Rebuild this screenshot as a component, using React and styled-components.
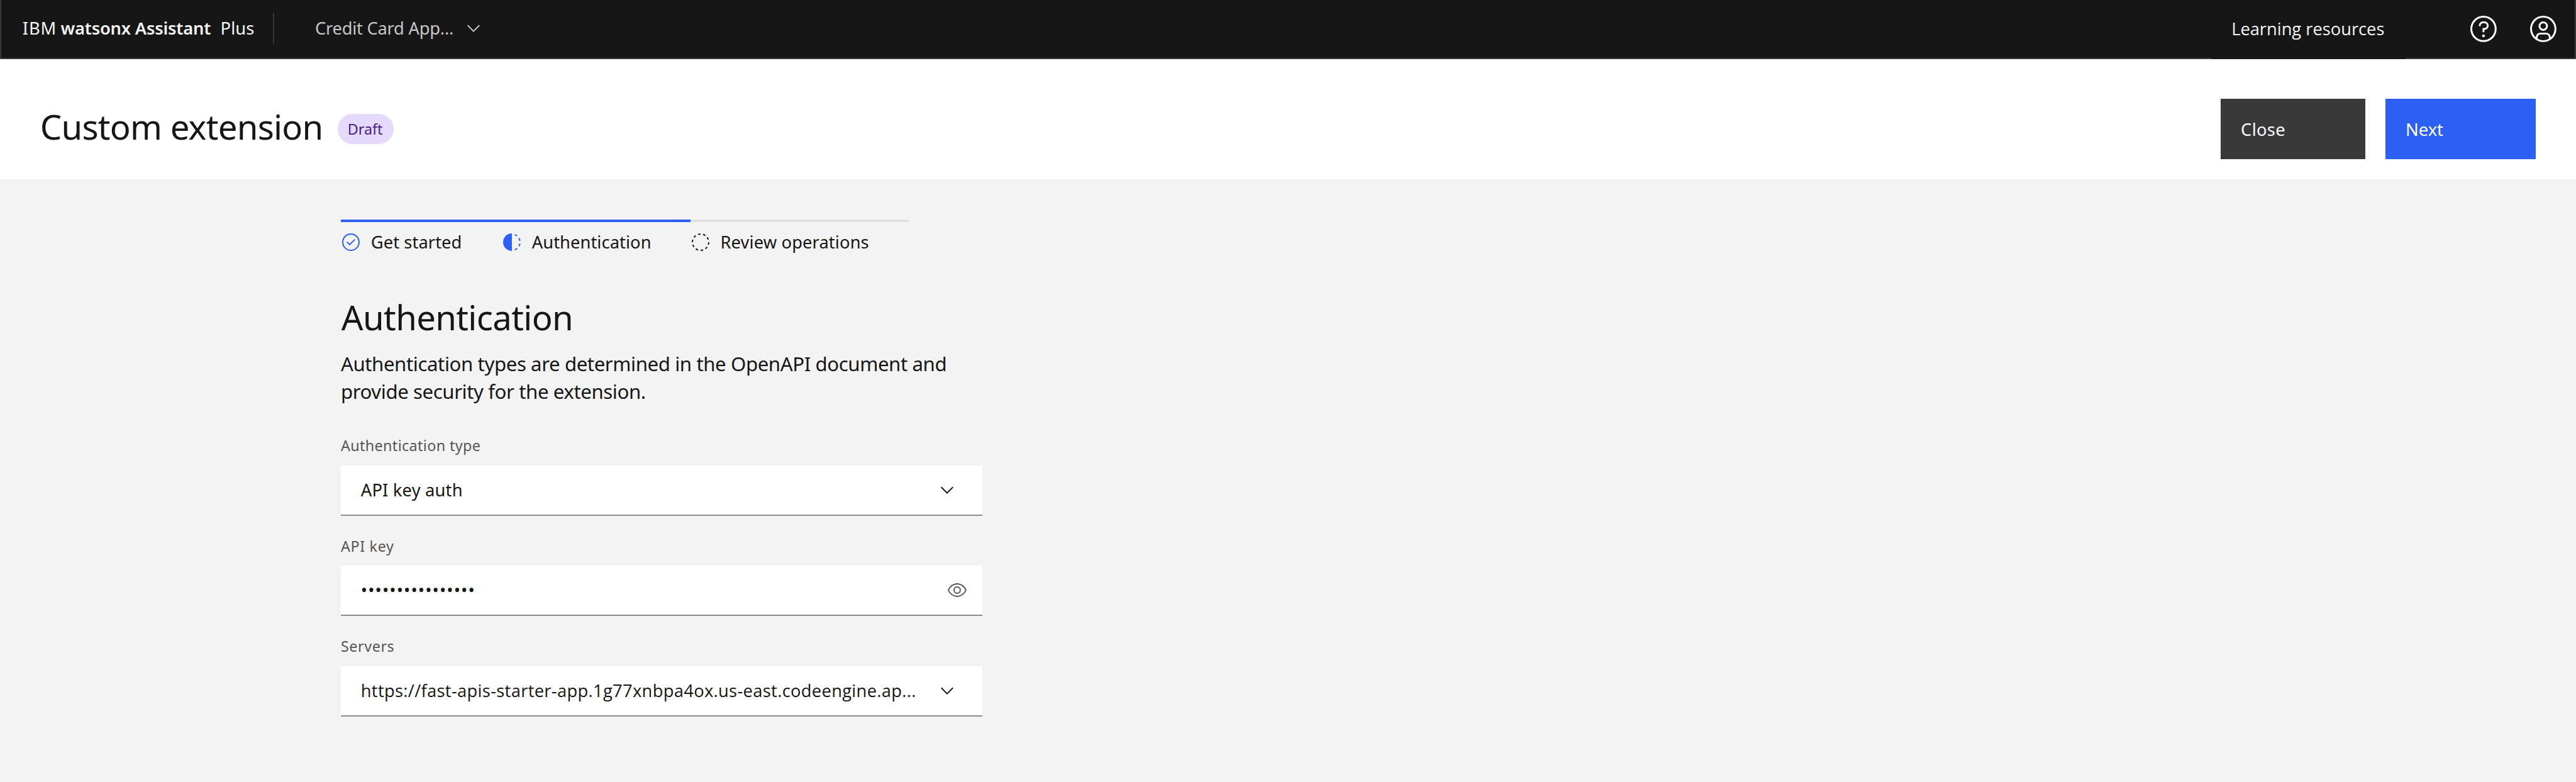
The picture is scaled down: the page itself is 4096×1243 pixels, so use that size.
import React from "react";
import styled, { createGlobalStyle, css } from "styled-components";

/* Sizes are authored on a 4112-unit wide canvas; 32 units make one rem. */
const u = (n) => `${n / 32}rem`;

const sans = `"Noto Sans", "Open Sans", sans-serif`;
const sansAlt = `"Open Sans", "Noto Sans", sans-serif`;

const color = {
  ink: "#161616",
  muted: "#565656",
  line: "#393939",
  blue: "#2c60f5",
  layer: "#f3f3f3",
  track: "#e0e0e0",
  rule: "#8d8d8d",
};

const GlobalStyle = createGlobalStyle`
  *, *::before, *::after { box-sizing: border-box; }
  html { font-size: calc(100vw / 128.5); }
  body { margin: 0; background: ${color.layer}; color: ${color.ink}; font-family: ${sans}; }
  h1, h2, p { margin: 0; font-weight: 400; }
  button { border: 0; font-family: inherit; text-align: left; }
`;

const type = css`
  font-size: ${(p) => u(p.$size || 27.4)};
  letter-spacing: ${(p) => u(p.$track || 0)};
  font-family: ${(p) => (p.$alt ? sansAlt : sans)};
  font-variant-ligatures: none;
  white-space: nowrap;
`;

const Text = styled.span`
  ${type}
  font-weight: ${(p) => p.$weight || 400};
`;

const Page = styled.div`
  display: flex;
  flex-direction: column;
  min-height: 100vh;
`;

const Header = styled.header`
  display: flex;
  align-items: center;
  height: ${u(94)};
  padding: 0 ${u(26)} ${u(1)} ${u(34)};
  border: solid ${color.line};
  border-width: 0 2px 2px;
  background: ${color.ink};
  color: #f4f4f4;
  line-height: ${u(40)};
`;

const Brand = styled.div`
  display: grid;
  grid-template-columns: ${u(61)} ${u(255)} ${u(84)};
  align-items: center;
`;

const Divider = styled.div`
  width: 2px;
  height: ${u(48)};
  background: ${color.line};
`;

const Switcher = styled.div`
  display: grid;
  grid-template-columns: ${u(237)} ${u(32)};
  align-items: center;
  margin-left: ${u(65)};
  color: #c6c6c6;
`;

const Learning = styled.div`
  display: flex;
  align-items: center;
  align-self: stretch;
  width: ${u(310)};
  margin: 0 ${u(100)} ${u(-3)} auto;
  padding: 0 0 ${u(2)} ${u(32)};
  background: ${color.ink};
  color: #f4f4f4;
`;

const HeaderIcons = styled.div`
  display: flex;
  gap: ${u(48)};
  padding-top: ${u(1)};
  color: #fff;
`;

const Svg = styled.svg`
  display: block;
  flex: none;
  width: ${(p) => u(p.$size || 32)};
  height: ${(p) => u(p.$size || 32)};
  fill: ${(p) => p.$fill || "currentColor"};
`;

const TitleBar = styled.section`
  display: flex;
  align-items: center;
  height: ${u(192)};
  padding: ${u(64)} ${u(64)} ${u(32)};
  background: #fff;
`;

const Title = styled.h1`
  ${type}
  width: ${u(475)};
  padding-bottom: ${u(6)};
  line-height: ${u(72)};
`;

const Tag = styled.span`
  ${type}
  width: ${u(89)};
  height: ${u(48)};
  padding-left: ${u(16)};
  border-radius: ${u(24)};
  background: #e6dafc;
  color: #4b2286;
  line-height: ${u(50)};
`;

const Actions = styled.div`
  display: flex;
  gap: ${u(32)};
  margin-left: auto;
`;

const Button = styled.button`
  ${type}
  width: ${(p) => u(p.$width)};
  height: ${u(96)};
  padding: 0 0 0 ${u(32)};
  background: ${(p) => (p.$primary ? color.blue : color.line)};
  color: #fff;
`;

const Main = styled.main`
  flex: 1;
  padding: ${u(64)} 0 0 ${u(544)};
`;

const Steps = styled.div`
  display: grid;
  grid-template-columns: ${u(257)} ${u(301)} ${u(349)};
`;

const Step = styled.div`
  display: flex;
  align-items: center;
  gap: ${u(16)};
  height: ${u(52)};
  padding-top: ${u(16)};
  border-top: 4px solid ${(p) => (p.$reached ? color.blue : color.track)};
  line-height: ${u(32)};
`;

const Heading = styled.h2`
  ${type}
  margin: ${u(69)} 0 0 ${u(1)};
  line-height: ${u(72)};
`;

const Intro = styled.p`
  ${type}
  margin: ${u(16)} 0 ${u(48)};
  line-height: ${u(44)};
`;

const Form = styled.div`
  display: flex;
  flex-direction: column;
  gap: ${u(32)};
  width: ${u(1024)};
`;

const Field = styled.div`
  display: flex;
  flex-direction: column;
  gap: ${u(16)};
`;

const Label = styled.div`
  ${type}
  height: ${u(32)};
  color: ${color.muted};
  line-height: ${u(34)};
`;

const Control = styled.div`
  display: flex;
  align-items: center;
  justify-content: space-between;
  height: ${u(80)};
  padding: 0 ${(p) => u(p.$end)} 0 ${u(32)};
  border-bottom: 2px solid ${color.rule};
  background: #fff;
  line-height: ${u(40)};
`;

const ChevronDown = () => (
  <Svg viewBox="0 0 16 16">
    <polygon points="8,11 3,6 3.7,5.3 8,9.6 12.3,5.3 13,6" />
  </Svg>
);

const Help = () => (
  <Svg $size={48} viewBox="0 0 32 32">
    <path d="M16,2A14,14,0,1,0,30,16,14,14,0,0,0,16,2Zm0,26A12,12,0,1,1,28,16,12,12,0,0,1,16,28Z" />
    <circle cx="16" cy="23.5" r="1.5" />
    <path d="M17,8H15.5A4.49,4.49,0,0,0,11,12.5V13h2v-.5A2.5,2.5,0,0,1,15.5,10H17a2.5,2.5,0,0,1,0,5H15v4.5h2V17a4.5,4.5,0,0,0,0-9Z" />
  </Svg>
);

const UserAvatar = () => (
  <Svg $size={48} viewBox="0 0 32 32">
    <path d="M16,8a5,5,0,1,0,5,5A5,5,0,0,0,16,8Zm0,8a3,3,0,1,1,3-3A3.0034,3.0034,0,0,1,16,16Z" />
    <path d="M16,2A14,14,0,1,0,30,16,14.0158,14.0158,0,0,0,16,2ZM10,26.3765V25a3.0033,3.0033,0,0,1,3-3h6a3.0033,3.0033,0,0,1,3,3v1.3765a11.8989,11.8989,0,0,1-12,0Zm13.9925-1.4507A5.0016,5.0016,0,0,0,19,20H13a5.0016,5.0016,0,0,0-4.9925,4.9258,12,12,0,1,1,15.985,0Z" />
  </Svg>
);

const CheckmarkOutline = () => (
  <Svg viewBox="0 0 32 32" $fill={color.blue}>
    <path d="M14 21.414 9 16.413 10.413 15 14 18.586 21.585 11 23 12.415 14 21.414z" />
    <path d="M16,2A14,14,0,1,0,30,16,14,14,0,0,0,16,2Zm0,26A12,12,0,1,1,28,16,12,12,0,0,1,16,28Z" />
  </Svg>
);

const Incomplete = () => (
  <Svg viewBox="0 0 32 32" $fill={color.blue}>
    <path d="M23.7642 6.8593l1.2851-1.5315A13.976 13.976 0 0020.8672 2.887l-.6836 1.8776A11.9729 11.9729 0 0123.7642 6.8593zM27.8079 14l1.9677-.4128A13.8888 13.8888 0 0028.14 9.0457L26.4087 10A12.52 12.52 0 0127.8079 14zM20.1836 27.2354l.6836 1.8776a13.976 13.976 0 004.1821-2.4408l-1.2851-1.5315A11.9729 11.9729 0 0120.1836 27.2354zM26.4087 22L28.14 23a14.14 14.14 0 001.6382-4.5872L27.8079 18.0659A12.1519 12.1519 0 0126.4087 22zM16 30V2a14 14 0 000 28z" />
  </Svg>
);

const CircleDash = () => (
  <Svg viewBox="0 0 32 32">
    <path d="M7.7 4.7a14.7 14.7 0 00-3 3.1L6.3 9A13.26 13.26 0 018.9 6.3zM4.6 12.3l-1.9-.6A12.51 12.51 0 002 16H4A11.48 11.48 0 014.6 12.3zM2.7 20.4a14.4 14.4 0 002 3.9l1.6-1.2a12.89 12.89 0 01-1.7-3.3zM7.8 27.3a14.4 14.4 0 003.9 2l.6-1.9A12.89 12.89 0 019 25.7zM11.7 2.7l.6 1.9A11.48 11.48 0 0116 4V2A12.51 12.51 0 0011.7 2.7zM24.2 27.3a15.18 15.18 0 003.1-3.1L25.7 23A11.53 11.53 0 0123 25.7zM27.4 19.7l1.9.6A15.47 15.47 0 0030 16H28A11.48 11.48 0 0127.4 19.7zM29.2 11.6a14.4 14.4 0 00-2-3.9L25.6 8.9a12.89 12.89 0 011.7 3.3zM24.1 4.6a14.4 14.4 0 00-3.9-2l-.6 1.9a12.89 12.89 0 013.3 1.7zM20.3 29.3l-.6-1.9A11.48 11.48 0 0116 28v2A21.42 21.42 0 0020.3 29.3z" />
  </Svg>
);

const View = () => (
  <Svg viewBox="0 0 32 32" $fill={color.muted}>
    <path d="M30.94,15.66A16.69,16.69,0,0,0,16,5,16.69,16.69,0,0,0,1.06,15.66a1,1,0,0,0,0,.68A16.69,16.69,0,0,0,16,27,16.69,16.69,0,0,0,30.94,16.34,1,1,0,0,0,30.94,15.66ZM16,25c-5.3,0-10.9-3.93-12.93-9C5.1,10.93,10.7,7,16,7s10.9,3.93,12.93,9C26.9,21.07,21.3,25,16,25Z" />
    <path d="M16,10a6,6,0,1,0,6,6A6,6,0,0,0,16,10Zm0,10a4,4,0,1,1,4-4A4,4,0,0,1,16,20Z" />
  </Svg>
);

export default function App() {
  return (
    <Page>
      <GlobalStyle />
      <Header>
        <Brand>
          <Text $track={0.8}>IBM</Text>
          <Text $weight={600} $track={-0.19}>watsonx Assistant</Text>
          <Text $track={0.1}>Plus</Text>
        </Brand>
        <Divider />
        <Switcher>
          <Text $track={-0.23}>Credit Card App...</Text>
          <ChevronDown />
        </Switcher>
        <Learning>
          <Text $alt>Learning resources</Text>
        </Learning>
        <HeaderIcons>
          <Help />
          <UserAvatar />
        </HeaderIcons>
      </Header>

      <TitleBar>
        <Title $size={54.7} $track={-0.71}>Custom extension</Title>
        <Tag $size={23.4}>Draft</Tag>
        <Actions>
          <Button $width={231} $track={0.3}>Close</Button>
          <Button $width={240} $primary>Next</Button>
        </Actions>
      </TitleBar>

      <Main>
        <Steps>
          <Step $reached>
            <CheckmarkOutline />
            <Text $track={0.1}>Get started</Text>
          </Step>
          <Step $reached>
            <Incomplete />
            <Text $track={0.08}>Authentication</Text>
          </Step>
          <Step>
            <CircleDash />
            <Text $track={0.13}>Review operations</Text>
          </Step>
        </Steps>

        <Heading $size={54.7} $track={-0.62}>Authentication</Heading>
        <Intro $size={31.3} $track={-0.4}>
          Authentication types are determined in the OpenAPI document and
          <br />
          provide security for the extension.
        </Intro>

        <Form>
          <Field>
            <Label $size={23.4} $track={0.39}>Authentication type</Label>
            <Control $end={40}>
              <Text $track={0.2}>API key auth</Text>
              <ChevronDown />
            </Control>
          </Field>
          <Field>
            <Label $size={23.4} $track={0.7}>API key</Label>
            <Control $end={24}>
              <Text $track={1.13}>••••••••••••••••</Text>
              <View />
            </Control>
          </Field>
          <Field>
            <Label $size={23.4} $track={0.6}>Servers</Label>
            <Control $end={40}>
              <Text $alt $track={0.34}>
                https://fast-apis-starter-app.1g77xnbpa4ox.us-east.codeengine.ap...
              </Text>
              <ChevronDown />
            </Control>
          </Field>
        </Form>
      </Main>
    </Page>
  );
}
